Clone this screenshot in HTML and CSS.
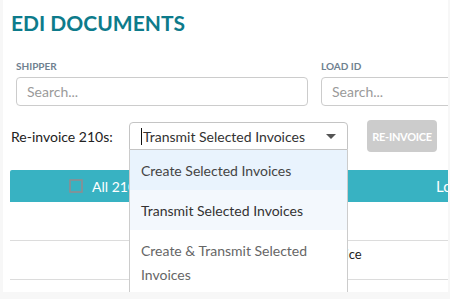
FILE: index.html
```html
<!DOCTYPE html>
<html lang="en">
<head>
    <meta charset="UTF-8">
    <meta name="viewport" content="width=device-width, initial-scale=1.0">
    <title>EDI Documents</title>
    <link rel="stylesheet" href="styles.css">
</head>
<body>
    <div class="page">
        <h1 class="page-title">EDI DOCUMENTS</h1>

        <div class="filters">
            <div class="filter">
                <label class="filter-label">SHIPPER</label>
                <input class="filter-input" type="text" placeholder="Search...">
            </div>
            <div class="filter">
                <label class="filter-label">LOAD ID</label>
                <input class="filter-input" type="text" placeholder="Search...">
            </div>
        </div>

        <div class="reinvoice">
            <span class="reinvoice-label">Re-invoice 210s:</span>
            <div class="select">
                <div class="select-box">
                    <span class="caret"></span>
                    <span class="select-value">Transmit Selected Invoices</span>
                    <span class="select-arrow"></span>
                </div>
                <ul class="select-menu">
                    <li class="option option-active">Create Selected Invoices</li>
                    <li class="option option-selected">Transmit Selected Invoices</li>
                    <li class="option">Create &amp; Transmit Selected Invoices</li>
                </ul>
            </div>
            <button type="button" class="btn-reinvoice" disabled>RE-INVOICE</button>
        </div>

        <div class="table">
            <div class="table-head">
                <div class="head-cell head-check">
                    <span class="checkbox"></span>
                    <span>All 210s</span>
                </div>
                <div class="head-cell">Load ID</div>
            </div>
            <div class="table-row">
                <div class="cell"></div>
                <div class="cell"></div>
            </div>
            <div class="table-row">
                <div class="cell"></div>
                <div class="cell">Invoice</div>
            </div>
            <div class="table-row">
                <div class="cell"></div>
                <div class="cell"></div>
            </div>
        </div>
    </div>
</body>
</html>
```

FILE: styles.css
```css
body {
    font-family: 'Lato', 'Open Sans', sans-serif;
    background-color: #f7f7f7;
    margin: 0;
    padding: 0;
}

.page {
    margin-left: 3px;
    width: 445px;
    height: 292px;
    background-color: #fff;
    overflow: hidden;
}

.page-title {
    margin: 0;
    padding: 10px 0 0 8px;
    font-size: 21px;
    line-height: 26px;
    font-weight: bold;
    color: #0d7b8b;
    white-space: nowrap;
}

.filters {
    display: flex;
    gap: 13px;
    margin-top: 24px;
    padding-left: 13px;
}

.filter {
    display: flex;
    flex-direction: column;
    flex-shrink: 0;
}

.filter-label {
    font-size: 10px;
    line-height: 12px;
    font-weight: bold;
    color: #6f8190;
    margin-bottom: 5px;
}

.filter-input {
    width: 292px;
    height: 29px;
    box-sizing: border-box;
    border: 1px solid #ccc;
    border-radius: 4px;
    padding: 0 10px;
    font-family: inherit;
    font-size: 14px;
}

.filter-input::placeholder {
    color: #9a9a9a;
}

.reinvoice {
    display: flex;
    align-items: center;
    margin-top: 14px;
    padding-left: 8px;
    height: 32px;
    position: relative;
    z-index: 2;
}

.reinvoice-label {
    width: 118px;
    flex-shrink: 0;
    font-size: 14px;
    color: #222;
}

.select {
    position: relative;
    width: 219px;
    flex-shrink: 0;
}

.select-box {
    display: flex;
    align-items: center;
    height: 28px;
    box-sizing: border-box;
    border: 1px solid #c4c4c4;
    border-radius: 4px 4px 0 0;
    padding: 0 11px;
    font-size: 14px;
    color: #333;
    background-color: #fff;
}

.caret {
    width: 1px;
    height: 17px;
    background-color: #111;
    margin-right: 1px;
}

.select-value {
    flex: 1;
    white-space: nowrap;
}

.select-arrow {
    width: 0;
    height: 0;
    border-left: 5px solid transparent;
    border-right: 5px solid transparent;
    border-top: 5px solid #555;
}

.select-menu {
    position: absolute;
    top: 100%;
    left: 0;
    width: 219px;
    box-sizing: border-box;
    margin: 0;
    padding: 0;
    list-style: none;
    background-color: #fff;
    border-left: 1px solid #ccc;
    border-right: 1px solid #ccc;
}

.option {
    padding: 9px 11px 7px;
    line-height: 24px;
    font-size: 14px;
    color: #666;
}

.option-active {
    background-color: #e9f3fd;
    color: #444;
}

.option-selected {
    background-color: #f3f8fd;
    color: #333;
}

.btn-reinvoice {
    margin-left: 19px;
    width: 70px;
    height: 32px;
    border: none;
    border-radius: 4px;
    background-color: #cccccc;
    color: #fff;
    font-family: inherit;
    font-size: 11px;
    font-weight: bold;
    letter-spacing: -0.3px;
    padding: 0;
}

.table {
    margin-top: 18px;
    margin-left: 7px;
    width: 460px;
}

.table-head {
    display: flex;
    height: 32px;
    background-color: #38b2c2;
    border-top-left-radius: 2px;
    color: #fff;
    font-size: 14px;
    white-space: nowrap;
}

.head-cell {
    display: flex;
    align-items: center;
}

.head-check {
    width: 367px;
    padding-left: 59px;
    gap: 9px;
    flex-shrink: 0;
}

.head-cell:last-child {
    font-size: 15px;
}

.checkbox {
    width: 14px;
    height: 14px;
    box-sizing: border-box;
    border: 2px solid #7f9399;
    border-radius: 1px;
}

.table-row {
    display: grid;
    grid-template-columns: 301px 1fr;
    height: 38px;
    border-bottom: 1px solid #dcdcdc;
}

.cell {
    padding: 5px 0 0 10px;
    line-height: 16px;
    font-size: 13px;
    color: #222;
}
```
